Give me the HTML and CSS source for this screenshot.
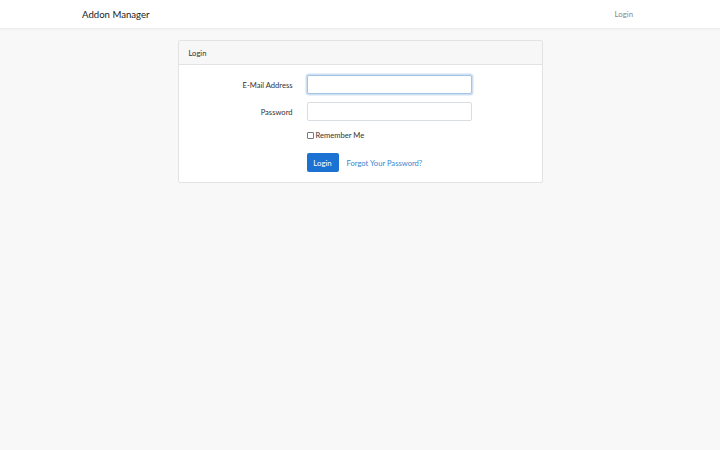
FILE: index.html
```html
<!DOCTYPE html>
<html>
<head>
<meta charset="utf-8">
<link rel="stylesheet" href="styles.css">
</head>
<body>
<nav class="navbar">
  <div class="nav-inner">
    <a class="brand">Addon Manager</a>
    <a class="nav-link">Login</a>
  </div>
</nav>
<main class="main">
  <div class="card">
    <div class="card-header">Login</div>
    <div class="card-body">
      <div class="row">
        <label class="label">E-Mail Address</label>
        <div class="field"><input class="input focus" type="email"></div>
      </div>
      <div class="row">
        <label class="label">Password</label>
        <div class="field"><input class="input" type="password"></div>
      </div>
      <div class="row">
        <div class="label"></div>
        <div class="field check"><input type="checkbox" class="cb"><span>Remember Me</span></div>
      </div>
      <div class="row last">
        <div class="label"></div>
        <div class="field actions"><button class="btn">Login</button><a class="link">Forgot Your Password?</a></div>
      </div>
    </div>
  </div>
</main>
</body>
</html>
```
FILE: styles.css
```css
* { box-sizing: border-box; }
html, body { margin: 0; padding: 0; }
body {
  background: #f8f8f8;
  font-family: Lato, "Open Sans", sans-serif;
  font-size: 7.6px;
  color: #212529;
  height: 450px;
}
.navbar {
  background: #fff;
  height: 29px;
  border-bottom: 1px solid #ececec;
  box-shadow: 0 1px 2px rgba(0,0,0,0.03);
}
.nav-inner {
  width: 570px;
  margin: 0 auto;
  height: 28px;
  padding: 0 7px;
  display: flex;
  align-items: center;
  justify-content: space-between;
}
.brand { font-size: 9.6px; color: #222; }
.nav-link { color: #888; font-size: 7.8px; margin-right: 5px; }
.main { padding-top: 11px; }
.card {
  width: 365px;
  margin: 0 auto;
  background: #fff;
  border: 1px solid #e3e3e3;
  border-radius: 2px;
}
.card-header {
  height: 24px;
  background: #f7f7f7;
  border-bottom: 1px solid #e3e3e3;
  padding: 0 10px;
  display: flex;
  align-items: center;
  color: #333;
}
.card-body { padding: 10px 10px 10px 10px; }
.row { display: flex; align-items: center; margin-bottom: 8px; }
.row.last { margin-bottom: 0; margin-top: 12px; }
.label {
  width: 111px;
  text-align: right;
  padding-right: 7px;
  color: #333;
}
.field { padding-left: 7px; }
.input {
  display: block;
  width: 165px;
  height: 19px;
  border: 1px solid #d8dde2;
  border-radius: 2px;
  background: #fff;
  outline: none;
  margin: 0;
}
.input.focus {
  border-color: #a4c4e4;
  box-shadow: 0 0 0 1.5px #cfe0f3;
}
.check { display: flex; align-items: center; height: 12px; color: #333; }
.cb {
  -webkit-appearance: none;
  appearance: none;
  width: 7px;
  height: 7px;
  margin: 0 2px 0 0;
  border: 1px solid #777;
  border-radius: 1px;
  background: #fff;
}
.actions { display: flex; align-items: center; }
.btn {
  height: 19px;
  width: 32px;
  background: #1c72d3;
  border: none;
  border-radius: 2px;
  color: #fff;
  font-family: inherit;
  font-size: 7.8px;
  padding: 0;
}
.link { color: #3a86cf; margin-left: 8px; }
```
